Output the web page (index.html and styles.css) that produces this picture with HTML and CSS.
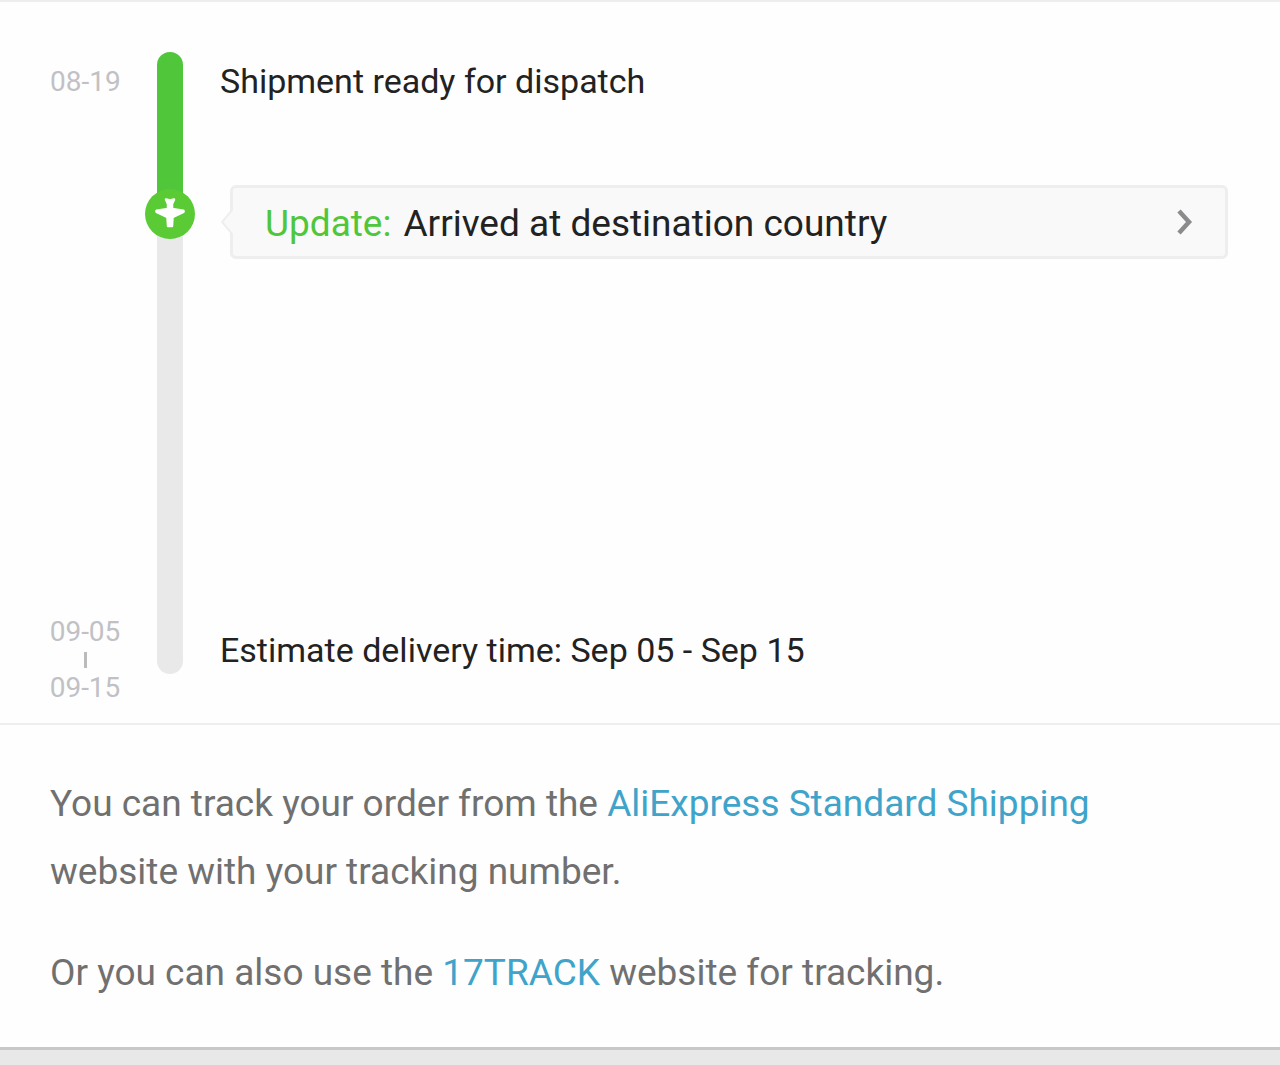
FILE: index.html
```html
<!DOCTYPE html>
<html lang="en">
<head>
<meta charset="utf-8">
<meta name="viewport" content="width=device-width, initial-scale=1">
<title>Order tracking</title>
<link rel="stylesheet" href="styles.css">
</head>
<body>
<main class="card">
  <section class="timeline">
    <time class="date date-start">08-19</time>
    <div class="track">
      <div class="track-done"></div>
      <svg class="track-icon" viewBox="0 0 50 50" aria-hidden="true">
        <circle cx="25" cy="25" r="25" fill="#5acb35"/>
        <path d="M21 10.500L25 11.500L29 10.500L27 15V20L38.500 21.800V22.800L27.500 28L27 37H23L22.500 28L11.500 22.800V21.800L23 20V15Z" fill="#fff" stroke="#fff" stroke-width="2.500" stroke-linejoin="round"/>
      </svg>
    </div>
    <p class="status status-start">Shipment ready for dispatch</p>
    <button class="update" type="button">
      <svg class="update-pointer" viewBox="0 0 12 26" aria-hidden="true">
        <path d="M12 0L1 13L12 26" fill="#f9f9fa" stroke="#eee" stroke-width="2"/>
      </svg>
      <span class="update-label">Update:</span>
      <span class="update-text">Arrived at destination country</span>
      <svg class="update-chevron" viewBox="0 0 20 30" aria-hidden="true">
        <path d="M4 4L14 15L4 26" fill="none" stroke="#8b8b8d" stroke-width="4.500"/>
      </svg>
    </button>
    <div class="date date-end">
      <time>09-05</time>
      <span class="date-rule"></span>
      <time>09-15</time>
    </div>
    <p class="status status-end">Estimate delivery time: Sep 05 - Sep 15</p>
  </section>
  <section class="help">
    <p>You can track your order from the <a href="#">AliExpress Standard Shipping</a> website with your tracking number.</p>
    <p>Or you can also use the <a href="#">17TRACK</a> website for tracking.</p>
  </section>
</main>
</body>
</html>
```
FILE: styles.css
```css
* {
  box-sizing: border-box;
}

body {
  margin: 0;
  background: #e8e8e8;
  font-family: Roboto, "Liberation Sans", sans-serif;
}

p {
  margin: 0;
}

.card {
  background: #fefefe;
  border-top: 2px solid #eee;
  border-bottom: 3px solid #c8c8c8;
}

.timeline {
  display: grid;
  grid-template-columns: 70px 50px 1fr;
  grid-template-rows: 133px auto 1fr;
  column-gap: 25px;
  min-height: 723px;
  padding: 50px 52px 21px 50px;
  border-bottom: 2px solid #eee;
}

.date {
  grid-column: 1;
  color: #c1c1c5;
  font-size: 28px;
  line-height: 28px;
  white-space: nowrap;
}

.date-start {
  grid-row: 1;
  padding-top: 16px;
}

.date-end {
  display: flex;
  flex-direction: column;
  align-items: center;
  align-self: end;
  grid-row: 3;
}

.date-rule {
  width: 3px;
  height: 16px;
  margin: 6px 0;
  background: #bbb;
}

.track {
  position: relative;
  grid-column: 2;
  grid-row: 1 / 4;
  justify-self: center;
  width: 26px;
  margin-bottom: 28px;
  background: #e9e9e9;
  border-radius: 13px;
}

.track-done {
  height: 162px;
  background: #50c63b;
  border-radius: 13px 13px 0 0;
}

.track-icon {
  position: absolute;
  top: 137px;
  left: -12px;
  width: 50px;
  height: 50px;
}

.status {
  grid-column: 3;
  color: #222;
  font-size: 34px;
  line-height: 40px;
}

.status-start {
  grid-row: 1;
  padding-top: 9px;
}

.status-end {
  align-self: end;
  grid-row: 3;
  margin-bottom: 32px;
}

.update {
  position: relative;
  display: flex;
  grid-column: 3;
  grid-row: 2;
  align-items: center;
  gap: 12px;
  height: 74px;
  margin-left: 10px;
  padding: 0 30px 0 32px;
  background: #f9f9fa;
  border: 3px solid #eee;
  border-radius: 6px;
  color: #222;
  font: inherit;
  font-size: 37px;
  line-height: 40px;
  text-align: left;
  cursor: pointer;
}

.update-pointer {
  position: absolute;
  top: 21px;
  left: -12px;
  width: 12px;
  height: 26px;
}

.update-label,
.update-text {
  padding-top: 4px;
}

.update-label {
  color: #50c63b;
}

.update-chevron {
  width: 20px;
  height: 30px;
  margin-left: auto;
}

.help {
  display: grid;
  gap: 33px;
  padding: 45px 80px 40px 50px;
  color: #707070;
  font-size: 37px;
  line-height: 68px;
}

.help a {
  color: #3fa3ca;
  text-decoration: none;
}
```
